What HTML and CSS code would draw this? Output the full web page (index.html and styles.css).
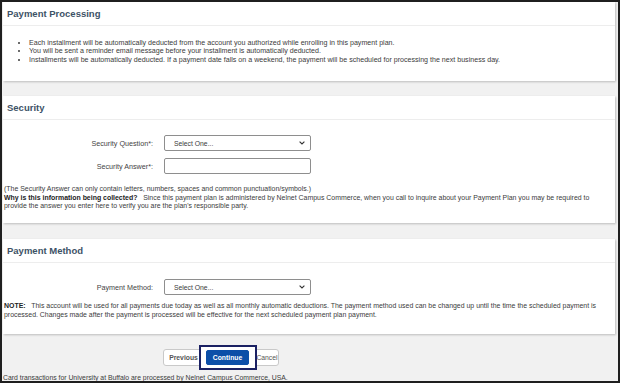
FILE: index.html
```html
<!DOCTYPE html>
<html lang="en">
<head>
  <meta charset="UTF-8">
  <title>Payment Plan Enrollment</title>
  <meta name="viewport" content="width=device-width, initial-scale=1.0">
  <link rel="stylesheet" href="styles.css">
</head>
<body>

  <div class="frame">

    <section class="card card-processing">
      <h2>Payment Processing</h2>
      <ul class="bullets">
        <li>Each installment will be automatically deducted from the account you authorized while enrolling in this payment plan.</li>
        <li>You will be sent a reminder email message before your installment is automatically deducted.</li>
        <li>Installments will be automatically deducted. If a payment date falls on a weekend, the payment will be scheduled for processing the next business day.</li>
      </ul>
    </section>

    <section class="card card-security">
      <h2>Security</h2>
      <div class="card-body">
        <div class="form-grid">
          <label for="question">Security Question*:</label>
          <div class="select">
            <select id="question">
              <option>Select One...</option>
            </select>
            <svg class="chevron" width="6" height="4" viewBox="0 0 6 4"><path d="M0.6 0.6 L3 3 L5.4 0.6" fill="none" stroke="#333" stroke-width="1.1"/></svg>
          </div>
          <label for="answer">Security Answer*:</label>
          <input type="text" id="answer">
        </div>
        <p class="note">
          (The Security Answer can only contain letters, numbers, spaces and common punctuation/symbols.)<br>
          <b>Why is this information being collected?</b>&nbsp;&nbsp; Since this payment plan is administered by Nelnet Campus Commerce, when you call to inquire about your Payment Plan you may be required to<br>provide the answer you enter here to verify you are the plan's responsible party.
        </p>
      </div>
    </section>

    <section class="card card-method">
      <h2>Payment Method</h2>
      <div class="card-body">
        <div class="form-grid">
          <label for="method">Payment Method:</label>
          <div class="select">
            <select id="method">
              <option>Select One...</option>
            </select>
            <svg class="chevron" width="6" height="4" viewBox="0 0 6 4"><path d="M0.6 0.6 L3 3 L5.4 0.6" fill="none" stroke="#333" stroke-width="1.1"/></svg>
          </div>
        </div>
        <p class="note">
          <b>NOTE:</b>&nbsp;&nbsp; This account will be used for all payments due today as well as all monthly automatic deductions. The payment method used can be changed up until the time the scheduled payment is processed. Changes made after the payment is processed will be effective for the next scheduled payment plan payment.
        </p>
      </div>
    </section>

    <div class="actions">
      <button class="btn btn-prev">Previous</button>
      <span class="focus-ring"><button class="btn btn-primary">Continue</button></span>
      <button class="btn btn-cancel">Cancel</button>
    </div>

    <p class="footer">Card transactions for University at Buffalo are processed by Nelnet Campus Commerce, USA.</p>

  </div>

</body>
</html>
```

FILE: styles.css
```css
body {
  margin: 0;
  background: #fff;
  font-family: "Liberation Sans", Arial, sans-serif;
  color: #3b3b3b;
}

.frame {
  width: 620px;
  height: 383px;
  box-sizing: border-box;
  border: 2px solid #1f1f1f;
  background: #f1f1f1;
  padding: 0 3px 0 1px;
  overflow: hidden;
}

.card {
  background: #fff;
  box-shadow: 1px 1px 2px rgba(0,0,0,0.22);
}

.card-processing { margin-bottom: 15px; }
.card-security { margin-bottom: 16px; }
.card-method { margin-bottom: 10px; }

.card h2 {
  margin: 0;
  height: 23px;
  line-height: 24px;
  padding-left: 4px;
  font-size: 9.5px;
  font-weight: bold;
  color: #3d5266;
  border-bottom: 1px solid #ededed;
}

.bullets {
  margin: 0;
  padding: 13px 0 17px 26px;
  font-size: 7.1px;
  line-height: 8.4px;
}

.card-body {
  padding-left: 1px;
}

.card-security .card-body { padding: 15px 0 13px 1px; }
.card-method .card-body { padding: 16px 0 15px 1px; }

.form-grid {
  display: grid;
  grid-template-columns: 149px 147px;
  column-gap: 11px;
  row-gap: 7px;
  align-items: center;
}

.form-grid label {
  text-align: right;
  font-size: 7.2px;
  color: #444;
}

.select {
  position: relative;
}

select,
input {
  display: block;
  box-sizing: border-box;
  width: 147px;
  height: 16px;
  margin: 0;
  border: 1px solid #8e8e8e;
  border-radius: 2px;
  background: #fff;
  font-family: inherit;
  font-size: 6.8px;
  color: #3b3b3b;
}

select {
  appearance: none;
  -webkit-appearance: none;
  padding: 0 0 0 9px;
}

.chevron {
  position: absolute;
  right: 6px;
  top: 6px;
}

.note {
  margin: 0;
  font-size: 6.95px;
  line-height: 8.4px;
}

.card-security .note { margin-top: 11px; }
.card-method .note { margin-top: 6px; line-height: 9px; }

.note b {
  color: #222;
}

.actions {
  display: flex;
  align-items: center;
  height: 26px;
  padding-left: 160px;
}

.btn {
  box-sizing: border-box;
  height: 17px;
  padding: 0;
  font-family: inherit;
  font-size: 6.8px;
  background: #fff;
  color: #555;
  border: 1px solid #c9c9c9;
  border-radius: 3px;
}

.btn-prev {
  width: 41px;
  font-weight: bold;
}

.btn-cancel {
  width: 28px;
  margin-left: -6px;
  padding-left: 4px;
}

.focus-ring {
  position: relative;
  z-index: 1;
  display: flex;
  margin-left: -5px;
  padding: 3px 6px 3px 5px;
  border: 2.5px solid #1b2163;
  background: #fff;
}

.btn-primary {
  width: 43px;
  height: 15px;
  background: #0c4fa8;
  border-color: #0c4fa8;
  border-radius: 2px;
  color: #fff;
  font-weight: bold;
}

.footer {
  margin: 4px 0 0;
  font-size: 6.85px;
  line-height: 8px;
  color: #3b3b3b;
}
```
